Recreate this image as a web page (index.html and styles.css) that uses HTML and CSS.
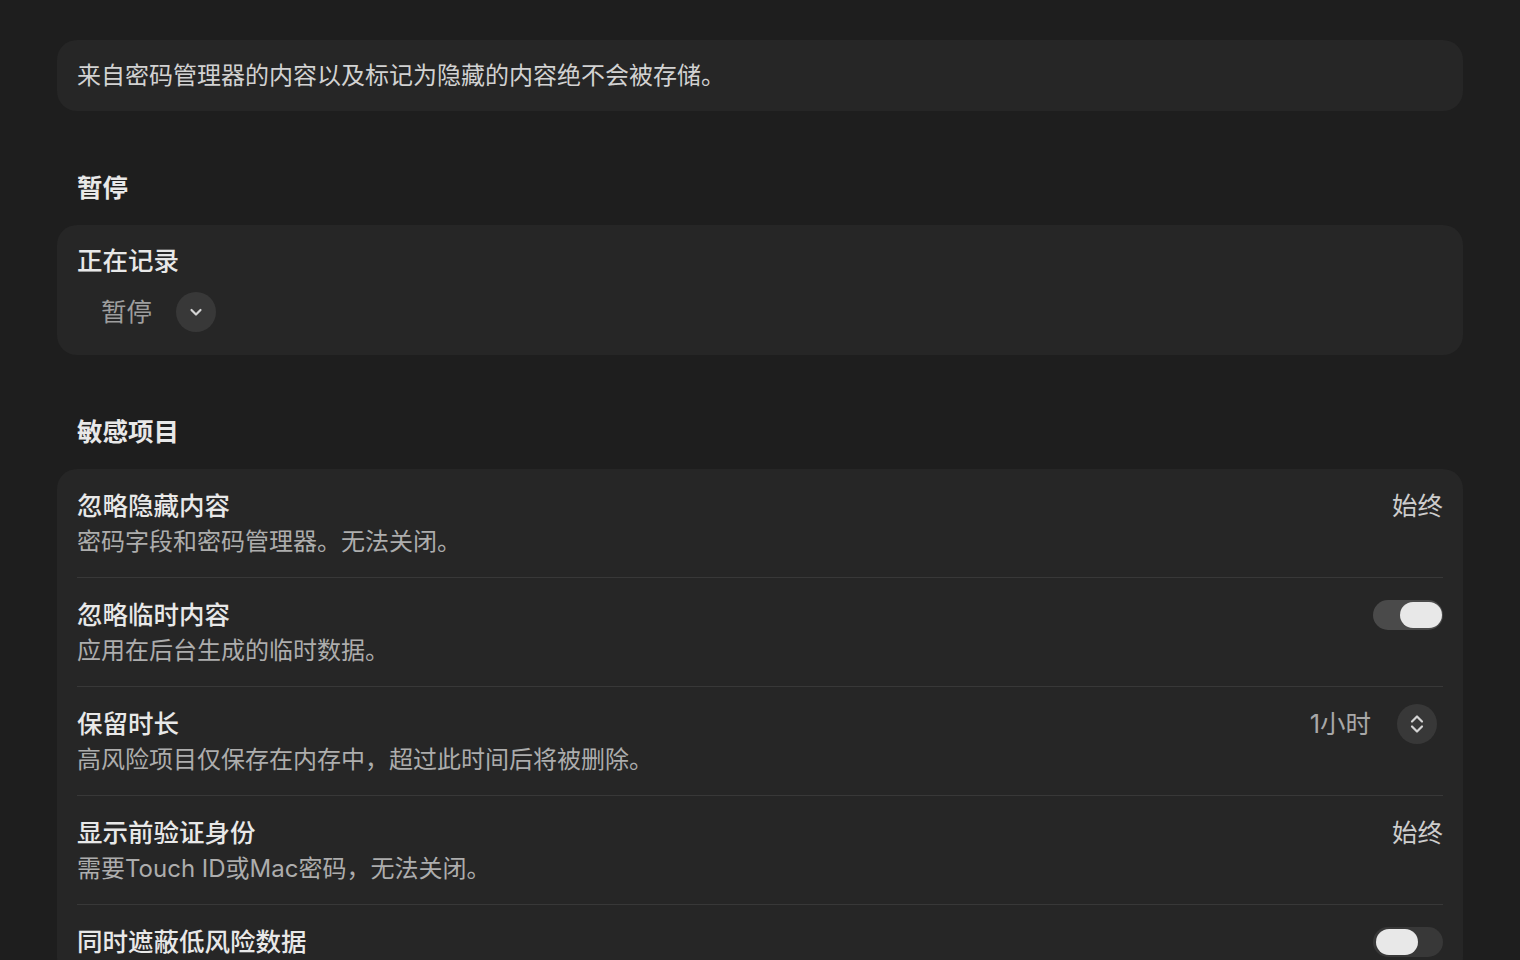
FILE: index.html
```html
<!DOCTYPE html>
<html lang="zh-CN">
<head>
  <meta charset="UTF-8" />
  <meta name="viewport" content="width=device-width, initial-scale=1.0"/>
  <title>隐私设置</title>
  <link rel="stylesheet" href="styles.css">
</head>
<body>
  <div class="page">
    <div class="card note">来自密码管理器的内容以及标记为隐藏的内容绝不会被存储。</div>

    <section class="group">
      <h2 class="group-title">暂停</h2>
      <div class="card pause-card">
        <div class="row-title">正在记录</div>
        <div class="popup">
          <span class="popup-value">暂停</span>
          <span class="round-btn">
            <svg width="16" height="16" viewBox="0 0 16 16"><path d="M3.5 6 L8 10.5 L12.5 6" fill="none" stroke="#d4d4d4" stroke-width="2.2" stroke-linecap="round" stroke-linejoin="round"/></svg>
          </span>
        </div>
      </div>
    </section>

    <section class="group">
      <h2 class="group-title">敏感项目</h2>
      <div class="card list">
        <div class="row">
          <div class="row-text">
            <div class="row-title">忽略隐藏内容</div>
            <div class="row-sub">密码字段和密码管理器。无法关闭。</div>
          </div>
          <div class="row-side"><span class="side-value">始终</span></div>
        </div>
        <div class="row">
          <div class="row-text">
            <div class="row-title">忽略临时内容</div>
            <div class="row-sub">应用在后台生成的临时数据。</div>
          </div>
          <div class="row-side"><span class="switch on"><span class="knob"></span></span></div>
        </div>
        <div class="row">
          <div class="row-text">
            <div class="row-title">保留时长</div>
            <div class="row-sub">高风险项目仅保存在内存中，超过此时间后将被删除。</div>
          </div>
          <div class="row-side stepper">
            <span class="stepper-value">1小时</span>
            <span class="round-btn">
              <svg width="18" height="24" viewBox="0 0 18 24"><path d="M4 9.5 L9 4.5 L14 9.5 M4 14.5 L9 19.5 L14 14.5" fill="none" stroke="#d4d4d4" stroke-width="2.2" stroke-linecap="round" stroke-linejoin="round"/></svg>
            </span>
          </div>
        </div>
        <div class="row">
          <div class="row-text">
            <div class="row-title">显示前验证身份</div>
            <div class="row-sub">需要Touch ID或Mac密码，无法关闭。</div>
          </div>
          <div class="row-side"><span class="side-value">始终</span></div>
        </div>
        <div class="row">
          <div class="row-text">
            <div class="row-title">同时遮蔽低风险数据</div>
          </div>
          <div class="row-side"><span class="switch"><span class="knob"></span></span></div>
        </div>
      </div>
    </section>
  </div>
</body>
</html>
```

FILE: styles.css
```css
html, body {
  margin: 0;
  background: #1e1e1e;
}
body {
  font-family: "Inter", "Noto Sans CJK SC", sans-serif;
  color: #e6e6e6;
  height: 960px;
  overflow: hidden;
}
.page {
  padding: 40px 57px 0;
}
.card {
  background: #262626;
  border-radius: 20px;
  padding: 0 20px;
}
.note {
  padding: 18px 20px;
  font-size: 24px;
  line-height: 35px;
  color: #d2d2d2;
}

.group {
  margin-top: 59px;
}
.group-title {
  margin: 0 0 19px;
  padding-left: 20px;
  font-size: 25.5px;
  line-height: 36px;
  font-weight: 700;
  color: #e8e8e8;
}

.row-title {
  font-size: 25.5px;
  line-height: 36px;
  font-weight: 500;
  color: #e8e8e8;
}
.row-sub {
  font-size: 24px;
  line-height: 36px;
  color: #adadad;
}

/* recording popup */
.pause-card {
  padding: 18px 20px 23px;
}
.popup {
  display: flex;
  align-items: center;
  gap: 24px;
  margin-top: 13px;
  padding-left: 24px;
  height: 40px;
}
.popup-value {
  font-size: 25.5px;
  line-height: 36px;
  color: #9e9e9e;
}
.round-btn {
  width: 40px;
  height: 40px;
  border-radius: 50%;
  background: #383838;
  display: flex;
  align-items: center;
  justify-content: center;
}

/* settings list */
.row {
  display: flex;
  justify-content: space-between;
  align-items: flex-start;
  padding: 19px 0 17px;
  border-bottom: 1px solid #383838;
}
.row:last-child {
  border-bottom: none;
}
.row-side {
  height: 36px;
  display: flex;
  align-items: center;
}
.side-value {
  font-size: 25.5px;
  line-height: 36px;
  color: #cdcdcd;
}
.stepper {
  gap: 26px;
  padding-right: 6px;
}
.stepper-value {
  font-size: 25.5px;
  line-height: 36px;
  color: #a8a8a8;
}

.switch {
  width: 70px;
  height: 30px;
  border-radius: 15px;
  background: #383838;
  display: flex;
  align-items: center;
  padding: 0 3px;
  box-sizing: border-box;
}
.switch.on {
  background: #4a4a4a;
  justify-content: flex-end;
  padding: 0 1px;
}
.knob {
  width: 42px;
  height: 26px;
  border-radius: 13px;
  background: #e8e8e8;
}
```
